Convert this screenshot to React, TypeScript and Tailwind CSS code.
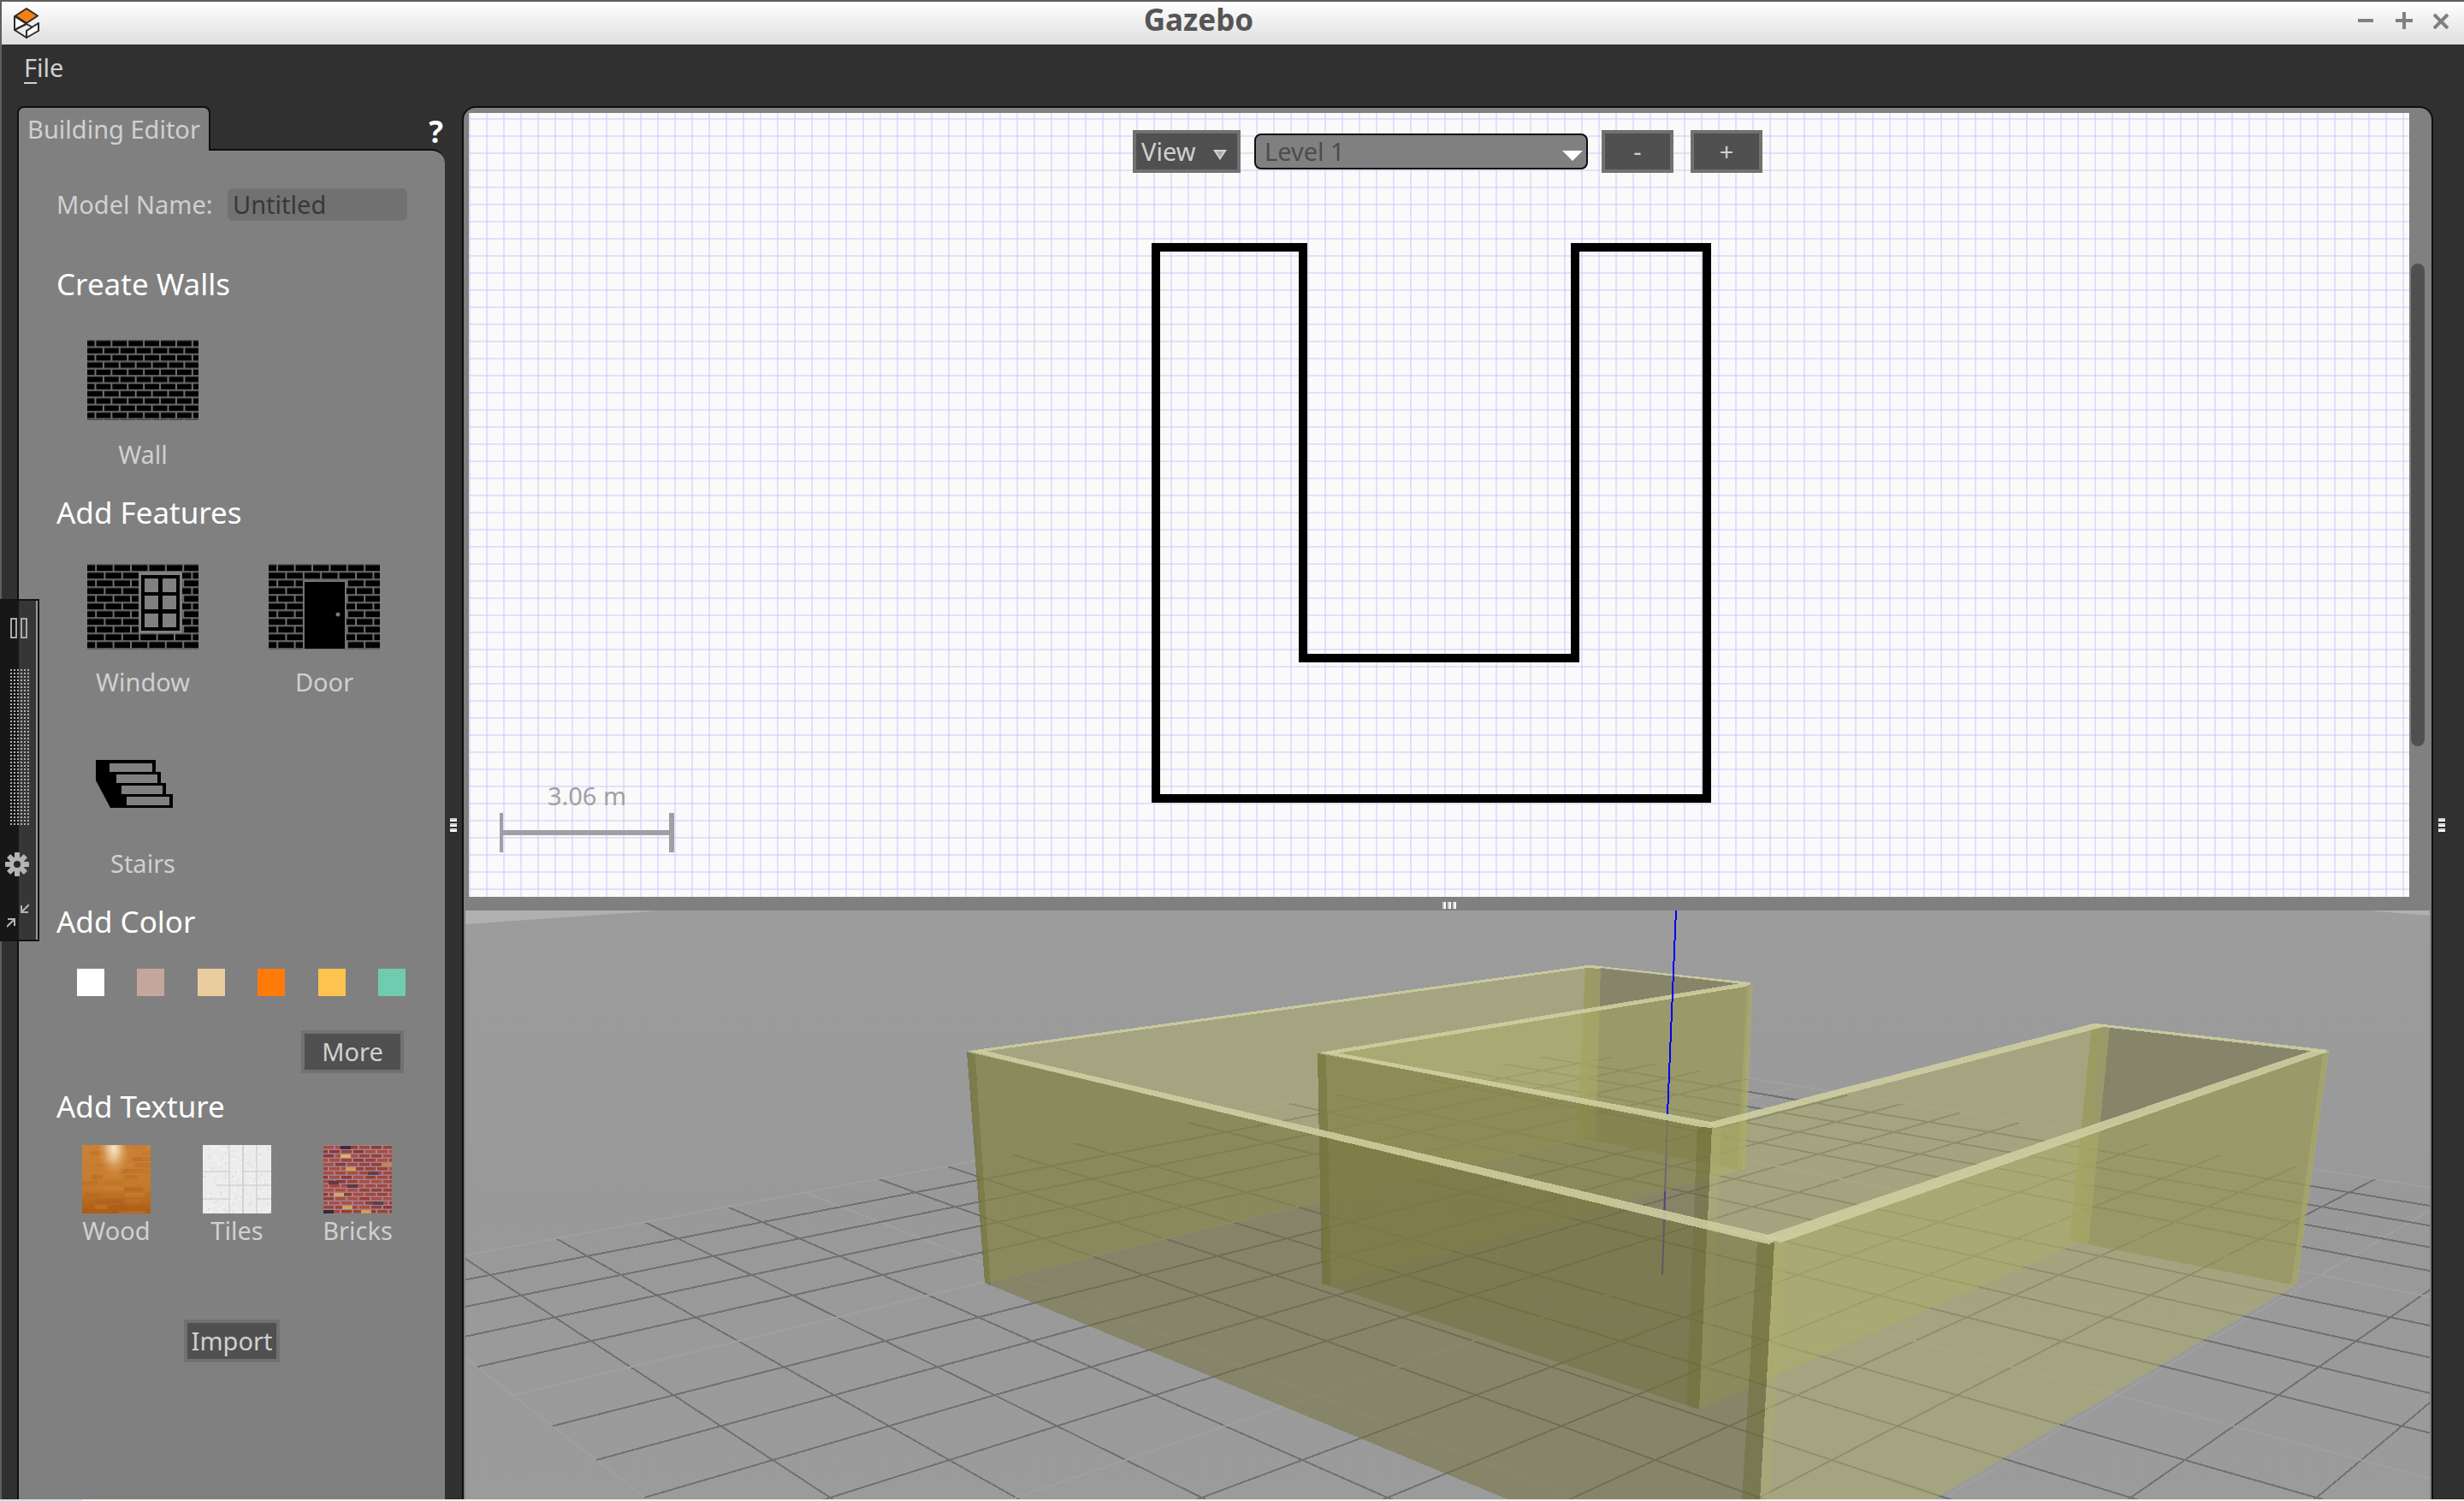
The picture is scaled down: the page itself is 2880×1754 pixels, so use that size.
import type { ReactNode } from "react";

type Point = [number, number];

/* ---------- 3D scene projection ---------- */

// Ground-plane coordinates (u, v) seen from a camera looking along the diagonal.
function project(u: number, v: number): Point {
  const depth = 27 + u + v;
  return [1692 + (2063 * (u - v) + 6918) / depth, 872 + 16683 / depth];
}

const gridSteps = Array.from({ length: 21 }, (_, i) => i - 10);

function GroundGrid() {
  const lines = gridSteps.flatMap((k) => [
    { key: `u${k}`, a: project(k, -10), b: project(k, 10), major: k % 5 === 0 },
    { key: `v${k}`, a: project(-10, k), b: project(10, k), major: k % 5 === 0 },
  ]);
  return (
    <g shapeRendering="crispEdges" strokeWidth="2">
      {lines.map((l) => (
        <line key={l.key} x1={l.a[0]} y1={l.a[1]} x2={l.b[0]} y2={l.b[1]} stroke={l.major ? "#a0a0a0" : "#717171"} />
      ))}
    </g>
  );
}

const DARK = "rgba(113,112,58,0.5)";
const LIGHT = "rgba(173,173,104,0.5)";
const EDGE = "rgba(208,208,162,0.85)";

function Scene() {
  return (
    <svg
      viewBox="544 1064 2296 688"
      preserveAspectRatio="xMidYMid slice"
      className="block size-full"
      role="img"
      aria-label="3D preview"
    >
      <defs>
        <linearGradient id="ground" x1="0" y1="0" x2="0" y2="1">
          <stop offset="0" stopColor="#9c9c9c" />
          <stop offset="0.5" stopColor="#999999" />
          <stop offset="1" stopColor="#9b9b9b" />
        </linearGradient>
      </defs>
      <rect x="544" y="1064" width="2296" height="688" fill="url(#ground)" />
      <polygon points="544,1064 774,1064 544,1080" fill="#b0b0b0" />
      <polygon points="2768,1064 2840,1064 2840,1070" fill="#b0b0b0" />
      <GroundGrid />
      <line x1="1949" y1="1302" x2="1943" y2="1490" stroke="#1c1cd0" strokeWidth="2" />

      <g shapeRendering="crispEdges">
        {/* outer left wall */}
        <polygon points="1134,1229 1862,1130 1854,1329 1153,1499" fill={LIGHT} />
        {/* far end of the left arm */}
        <polygon points="1853,1130 2045,1150 2036,1368 1843,1329" fill={DARK} />
        <polygon points="1853,1130 1871,1130 1865,1331 1843,1329" fill={LIGHT} />
        {/* inner wall of the left arm */}
        <polygon points="1540,1231 2045,1150 2040,1366 1550,1502" fill={LIGHT} />
        <polygon points="2042,1152 2049,1152 2040,1366 2031,1366" fill={LIGHT} />
        {/* inner wall of the right arm */}
        <polygon points="2001,1315 2455,1198 2430,1452 1986,1647" fill={LIGHT} />
        {/* inner cross wall */}
        <polygon points="1540,1231 2001,1315 1986,1647 1545,1500" fill={DARK} />
        <polygon points="1540,1231 1550,1233 1556,1502 1545,1500" fill="rgba(104,104,50,0.4)" />
        <polygon points="1984,1313 2001,1315 1986,1647 1971,1642" fill="rgba(104,104,50,0.4)" />
        {/* far end of the right arm */}
        <polygon points="2445,1198 2721,1229 2683,1502 2419,1450" fill={DARK} />
        <polygon points="2445,1199 2466,1199 2441,1454 2419,1450" fill={LIGHT} />
        {/* outer right wall */}
        <polygon points="2071,1449 2721,1229 2683,1502 2257,1754 2053,1874" fill={LIGHT} />
        <polygon points="2001,1318 2012,1318 1998,1640 1986,1647" fill="rgba(174,174,108,0.35)" />
        <polygon points="2074,1452 2088,1450 2068,1754 2057,1754" fill="rgba(174,174,108,0.35)" />
        <polygon points="2715,1232 2722,1229 2685,1500 2678,1503" fill="rgba(174,174,108,0.5)" />
        {/* outer front wall */}
        <polygon points="1130,1229 2074,1452 2057,1754 1767,1754 1151,1499" fill={DARK} />
        <polygon points="1130,1229 1140,1233 1158,1503 1151,1499" fill="rgba(104,104,50,0.4)" />
        <polygon points="2054,1449 2074,1452 2057,1754 2036,1754" fill="rgba(104,104,50,0.45)" />

        {/* wall tops */}
        <g fill={EDGE}>
          <polygon points="1132,1228 1856,1128 1872,1129 1870,1132 1856,1131 1148,1229" />
          <polygon points="1860,1128 2046,1148 2046,1151 1872,1131" />
          <polygon points="1542,1230 2034,1149 2046,1150 2040,1153 1562,1231" />
          <polygon points="1542,1230 1562,1230 2005,1312 2001,1318 1988,1317" />
          <polygon points="1996,1312 2447,1196 2466,1198 2455,1201 2004,1318" />
          <polygon points="2450,1196 2722,1227 2716,1230 2450,1199" />
          <polygon points="1130,1228 1152,1228 2080,1446 2068,1454 2054,1451" />
          <polygon points="2060,1445 2704,1227 2724,1229 2712,1232 2082,1452" />
        </g>
      </g>
      <line x1="1959" y1="1064" x2="1949" y2="1302" stroke="#0000f5" strokeWidth="2" shapeRendering="crispEdges" />
    </svg>
  );
}

/* ---------- tool icons ---------- */

function BrickFill({ height, pitchX, pitchY }: { height: number; pitchX: number; pitchY: number }) {
  const rows = Math.ceil(height / pitchY);
  const cols = Math.ceil(130 / pitchX) + 1;
  return (
    <g>
      <rect width="130" height={height} fill="#000" />
      {Array.from({ length: rows + 1 }, (_, r) => (
        <rect key={r} x="0" y={r * pitchY - 1} width="130" height="2.4" fill="#5c5c5c" />
      ))}
      {Array.from({ length: rows }, (_, r) =>
        Array.from({ length: cols }, (_, c) => (
          <rect
            key={`${r}-${c}`}
            x={(r % 2 ? pitchX - 1 : pitchX / 2 - 1) + c * pitchX}
            y={r * pitchY}
            width="2"
            height={pitchY}
            fill="#707070"
          />
        )),
      )}
    </g>
  );
}

function WallIcon() {
  return (
    <svg viewBox="0 0 130 94" className="h-[94px] w-[130px]" aria-hidden="true">
      <BrickFill height={94} pitchX={18.9} pitchY={8.4} />
    </svg>
  );
}

function WindowIcon() {
  return (
    <svg viewBox="0 0 130 100" className="h-[100px] w-[130px]" aria-hidden="true">
      <BrickFill height={100} pitchX={20.4} pitchY={9} />
      <rect x="60" y="9" width="51" height="72" fill="#808080" />
      <rect x="63" y="13" width="45" height="65" fill="#000" />
      {[17, 37, 58].map((y) => (
        <g key={y} fill="#808080">
          <rect x="67" y={y} width="16" height="16" />
          <rect x="88" y={y} width="16" height="16" />
        </g>
      ))}
    </svg>
  );
}

function DoorIcon() {
  return (
    <svg viewBox="0 0 130 100" className="h-[100px] w-[130px]" aria-hidden="true">
      <BrickFill height={100} pitchX={20.4} pitchY={9} />
      <rect x="40" y="19" width="51" height="81" fill="#747474" />
      <rect x="42" y="21" width="47" height="78" fill="#000" />
      <circle cx="81" cy="59" r="2.500" fill="#777" />
    </svg>
  );
}

function StairsIcon() {
  return (
    <svg viewBox="0 0 130 56" className="h-[56px] w-[130px]" aria-hidden="true">
      <path d="M10 0H80V14H86V27H92V40H100V56H27L10 24Z" fill="#000" />
      <g fill="#808080">
        <rect x="26" y="4" width="50" height="10" />
        <rect x="34" y="17" width="48" height="10" />
        <rect x="40" y="30" width="48" height="10" />
        <rect x="46" y="43" width="50" height="10" />
      </g>
    </svg>
  );
}

function Tool({ label, gap, children }: { label: string; gap: string; children: ReactNode }) {
  return (
    <button type="button" className={`flex w-[130px] flex-col items-center ${gap}`}>
      {children}
      <span>{label}</span>
    </button>
  );
}

/* ---------- texture swatches ---------- */

function noise(i: number) {
  const x = Math.sin(i * 127.1 + 11.7) * 43758.5453;
  return x - Math.floor(x);
}

function WoodSwatch() {
  const tones = ["#b5651d", "#d08a3c", "#a85a1c", "#c97f33", "#bb6d22"];
  return (
    <svg viewBox="0 0 80 80" className="size-20" aria-hidden="true">
      <defs>
        <linearGradient id="woodBase" x1="0" y1="0" x2="0" y2="1">
          <stop offset="0" stopColor="#cb8238" />
          <stop offset="0.6" stopColor="#c47a2c" />
          <stop offset="1" stopColor="#ad5a14" />
        </linearGradient>
        <radialGradient id="woodShine">
          <stop offset="0" stopColor="#f8e8c6" />
          <stop offset="0.35" stopColor="#ecc596" stopOpacity="0.85" />
          <stop offset="1" stopColor="#d08a3c" stopOpacity="0" />
        </radialGradient>
      </defs>
      <rect width="80" height="80" fill="url(#woodBase)" />
      {Array.from({ length: 36 }, (_, i) => (
        <rect
          key={i}
          x={Math.round(noise(i) * 80) - 10}
          y={Math.floor(i / 3) * 7}
          width={12 + Math.round(noise(i + 50) * 22)}
          height={5}
          fill={tones[i % 5]}
          opacity="0.35"
        />
      ))}
      <ellipse cx="37" cy="4" rx="20" ry="36" fill="url(#woodShine)" />
    </svg>
  );
}

function TilesSwatch() {
  return (
    <svg viewBox="0 0 80 80" className="size-20" aria-hidden="true">
      <rect width="80" height="80" fill="#ececec" />
      {Array.from({ length: 160 }, (_, i) => (
        <rect
          key={i}
          x={Math.floor(noise(i) * 40) * 2}
          y={Math.floor(noise(i + 300) * 40) * 2}
          width="2"
          height="2"
          fill={i % 3 ? "#f4f4f4" : "#dedede"}
        />
      ))}
      <g fill="#d2d2d2">
        <rect x="30" y="0" width="2" height="80" opacity="0.7" />
        <rect x="46" y="0" width="2" height="80" />
        <rect x="62" y="0" width="2" height="80" opacity="0.7" />
        <rect x="0" y="30" width="32" height="2" opacity="0.7" />
        <rect x="48" y="30" width="32" height="2" opacity="0.7" />
        <rect x="16" y="46" width="64" height="2" opacity="0.7" />
        <rect x="0" y="62" width="32" height="2" opacity="0.7" />
        <rect x="62" y="62" width="18" height="2" opacity="0.7" />
      </g>
    </svg>
  );
}

function BricksSwatch() {
  const tones = ["#a8453a", "#9c4232", "#b04c3a", "#96402f", "#a94f3d", "#8d3a34"];
  const accents = [
    [20, 1, "#3c2c46"],
    [20, 11, "#d8b070"],
    [26, 26, "#cfa04e"],
    [52, 31, "#5a4048"],
    [68, 21, "#c98450"],
    [6, 42, "#5c3e44"],
    [28, 46, "#583a44"],
    [12, 56, "#d2a860"],
    [58, 66, "#57404a"],
    [22, 71, "#cda552"],
    [44, 76, "#c8a056"],
    [0, 76, "#33283c"],
  ] as const;
  return (
    <svg viewBox="0 0 80 80" className="size-20" aria-hidden="true">
      <rect width="80" height="80" fill="#a28094" />
      {Array.from({ length: 16 }, (_, r) =>
        Array.from({ length: 7 }, (_, c) => (
          <rect
            key={`${r}-${c}`}
            x={c * 14 - (r % 2 ? 7 : 0)}
            y={r * 5 + 1}
            width="12"
            height="3.500"
            fill={tones[Math.floor(noise(r * 7 + c) * 6)]}
          />
        )),
      )}
      {accents.map(([x, y, fill]) => (
        <rect key={`${x}-${y}`} x={x} y={y} width="12" height="4" fill={fill} />
      ))}
    </svg>
  );
}

function Texture({ label, children }: { label: string; children: ReactNode }) {
  return (
    <button type="button" className="flex w-20 flex-col items-center whitespace-nowrap">
      {children}
      <span>{label}</span>
    </button>
  );
}

/* ---------- window chrome ---------- */

function TitleBar() {
  return (
    <header className="flex h-[50px] shrink-0 items-center bg-linear-to-b from-white to-[#dedede] pr-4 pl-[14px]">
      <svg viewBox="0 0 30 36" className="h-[36px] w-[30px]" aria-hidden="true">
        <g stroke="#2a2a2a" strokeWidth="2" strokeLinejoin="round">
          <path d="M1 10L15 19L1 26Z" fill="#fff" />
          <path d="M1 26L15 19L22 23L15 27V35Z" fill="#eee" />
          <path d="M15 27L29 18V27L15 35Z" fill="#fff" />
          <path d="M15 1L28 9.500L15 18L2 9.500Z" fill="#f58113" />
        </g>
      </svg>
      <h1 className="flex-1 pb-2 text-center text-[35px]/[40px] font-bold text-[#555]">Gazebo</h1>
      <div className="flex items-center gap-6 pb-[6px]">
        <button type="button" aria-label="Minimize">
          <svg viewBox="0 0 20 20" className="size-5" aria-hidden="true">
            <path d="M0 10H18" stroke="#808080" strokeWidth="4" />
          </svg>
        </button>
        <button type="button" aria-label="Maximize">
          <svg viewBox="0 0 20 20" className="size-5" aria-hidden="true">
            <path d="M0 10H20M10 0V20" stroke="#808080" strokeWidth="4" />
          </svg>
        </button>
        <button type="button" aria-label="Close">
          <svg viewBox="0 0 20 20" className="size-5" aria-hidden="true">
            <path d="M1 3L17 19M17 3L1 19" stroke="#808080" strokeWidth="4" />
          </svg>
        </button>
      </div>
    </header>
  );
}

function SideGrip() {
  return (
    <div className="flex flex-col gap-[2px]" aria-hidden="true">
      <div className="h-1 w-2 border-t-2 border-[#ccc] bg-white" />
      <div className="h-1 w-2 border-t-2 border-[#ccc] bg-white" />
      <div className="h-1 w-2 border-t-2 border-[#ccc] bg-white" />
    </div>
  );
}

const heading = "text-[35px]/[48px] text-white";
const pushButton = "h-[50px] border-4 border-[#717171] bg-[#505050] text-center leading-[40px]";

function Palette() {
  const colors = [
    { name: "White", bg: "bg-white" },
    { name: "Rose", bg: "bg-[#c3a79d]" },
    { name: "Sand", bg: "bg-[#e9cd9f]" },
    { name: "Orange", bg: "bg-[#fe7a09]" },
    { name: "Yellow", bg: "bg-[#fec24f]" },
    { name: "Mint", bg: "bg-[#70ccae]" },
  ];
  return (
    <aside className="ml-[18px] flex w-[500px] shrink-0 flex-col">
      <div className="flex h-[50px] items-start justify-between">
        <button
          type="button"
          role="tab"
          aria-selected="true"
          className="relative h-[52px] w-[226px] rounded-t-lg border-2 border-b-0 border-[#0e0e0e] bg-[#808080] text-center whitespace-nowrap"
        >
          Building Editor
        </button>
        <button type="button" className="mt-[10px] mr-[2px] text-[35px]/[40px] font-bold text-white">
          ?
        </button>
      </div>
      <div className="flex flex-1 flex-col rounded-tr-2xl border-t-2 border-l-2 border-[#0e0e0e] bg-[#808080] pt-[44px] pr-[44px] pl-[44px]">
        <div className="flex h-[38px] items-center justify-between">
          <label htmlFor="model-name">Model Name:</label>
          <input
            id="model-name"
            defaultValue="Untitled"
            className="h-[38px] w-[210px] rounded-md bg-[#717171] px-[6px] text-[#383838] outline-none"
          />
        </div>

        <h2 className={`${heading} mt-[50px]`}>Create Walls</h2>
        <div className="mt-[41px] pl-9">
          <Tool label="Wall" gap="gap-5">
            <WallIcon />
          </Tool>
        </div>

        <h2 className={`${heading} mt-6`}>Add Features</h2>
        <div className="mt-9 flex gap-[82px] pl-9">
          <Tool label="Window" gap="gap-[18px]">
            <WindowIcon />
          </Tool>
          <Tool label="Door" gap="gap-[18px]">
            <DoorIcon />
          </Tool>
        </div>
        <div className="mt-[71px] pl-9">
          <Tool label="Stairs" gap="gap-[45px]">
            <StairsIcon />
          </Tool>
        </div>

        <h2 className={`${heading} mt-6`}>Add Color</h2>
        <div className="mt-[31px] flex justify-between pr-[2px] pl-6">
          {colors.map((c) => (
            <button key={c.name} type="button" aria-label={c.name} className={`size-8 ${c.bg}`} />
          ))}
        </div>
        <button type="button" className={`${pushButton} mt-10 mr-1 w-[120px] self-end`}>
          More
        </button>

        <h2 className={`${heading} mt-[15px]`}>Add Texture</h2>
        <div className="mt-[21px] flex justify-between pr-[18px] pl-[30px]">
          <Texture label="Wood">
            <WoodSwatch />
          </Texture>
          <Texture label="Tiles">
            <TilesSwatch />
          </Texture>
          <Texture label="Bricks">
            <BricksSwatch />
          </Texture>
        </div>
        <button type="button" className={`${pushButton} mt-[84px] w-[112px] self-center`}>
          Import
        </button>
      </div>
    </aside>
  );
}

function RecorderBar() {
  return (
    <div className="absolute top-[576px] -left-[2px] flex h-[400px] w-[46px] flex-col border-y-2 border-r-2 border-[#141414] bg-linear-to-r from-[#171717] from-50% to-[#363636] to-50%">
      <div className="flex flex-1 flex-col border-r-2 border-[#999] pt-5">
        <button type="button" aria-label="Pause" className="ml-3 flex gap-1">
          <span className="h-6 w-2 border-2 border-[#aaa]" />
          <span className="h-6 w-2 border-2 border-[#aaa]" />
        </button>
        <svg className="mt-9 ml-3 h-[182px] w-[22px]" viewBox="0 0 22 182" shapeRendering="crispEdges" aria-hidden="true">
          <defs>
            <pattern id="dots" width="4" height="4" patternUnits="userSpaceOnUse">
              <rect width="2" height="2" fill="#b0b0b0" />
            </pattern>
          </defs>
          <rect width="22" height="182" fill="url(#dots)" />
        </svg>
        <button type="button" aria-label="Settings" className="mt-8 ml-[6px] w-7">
          <svg viewBox="-14 -14 28 28" className="size-7" aria-hidden="true">
            <g fill="#b4b4b4">
              {[0, 45, 90, 135].map((a) => (
                <rect key={a} x="-3" y="-14" width="6" height="28" rx="1" transform={`rotate(${a})`} />
              ))}
              <circle r="9" />
            </g>
            <circle r="4" fill="#262626" />
          </svg>
        </button>
        <button type="button" aria-label="Shrink" className="mt-8 ml-2 w-[26px]">
          <svg viewBox="0 0 26 28" className="h-7 w-[26px]" fill="none" stroke="#b4b4b4" strokeWidth="2" aria-hidden="true">
            <path d="M26 1L17 10M17 2V10H25" />
            <path d="M0 27L9 18M1 18H9V26" />
          </svg>
        </button>
      </div>
    </div>
  );
}

function PlanView() {
  return (
    <section className="relative flex min-h-0 flex-[916] pt-[6px] pl-[6px]">
      <div className="relative flex-1 overflow-hidden bg-[#fafafa] bg-[linear-gradient(90deg,#c8c6fc80_2px,transparent_2px),linear-gradient(#c8c6fc80_2px,transparent_2px)] bg-size-[20px_20px] bg-position-[0_0,0_6px]">
        <svg
          viewBox="0 0 654 654"
          className="absolute top-[152px] left-[798px] size-[654px]"
          fill="none"
          stroke="#000"
          strokeWidth="10"
          role="img"
          aria-label="Floor plan"
        >
          <path d="M5 5H177V485H495V5H649V649H5Z" />
        </svg>
        <div className="absolute bottom-[52px] left-9 w-[204px] text-center text-[#a0a0a4]">
          <div>3.06 m</div>
          <svg viewBox="0 0 204 46" className="block h-[46px] w-[204px]" fill="#a0a0a4" aria-hidden="true">
            <rect width="4" height="46" />
            <rect x="198" width="6" height="46" />
            <rect y="20" width="204" height="6" />
          </svg>
        </div>
      </div>
      <div className="w-[26px] pt-[176px] pl-[2px]">
        <div className="h-[564px] w-4 rounded-full bg-[#505050]" />
      </div>
      <div className="absolute inset-x-0 top-[26px] flex items-center justify-center gap-4">
        <button type="button" className={`${pushButton} flex w-[126px] items-center justify-between pr-3 pl-[6px]`}>
          View
          <svg viewBox="0 0 16 12" className="mt-2 h-3 w-4" aria-hidden="true">
            <path d="M0 0H16L8 12Z" fill="#d4d4d4" />
            <path d="M4 2H12L8 9Z" fill="#aaa" />
          </svg>
        </button>
        <div className="relative">
          <select
            aria-label="Level"
            className="block h-[42px] w-[390px] appearance-none rounded-lg border-2 border-[#0e0e0e] bg-[#808080] pl-[10px] leading-[38px] text-[#4c4c4c]"
          >
            <option>Level 1</option>
          </select>
          <svg viewBox="0 0 24 12" className="pointer-events-none absolute top-5 right-[6px] h-3 w-6" aria-hidden="true">
            <path d="M0 0H24L12 12Z" fill="#fff" />
          </svg>
        </div>
        <div className="flex gap-5">
          <button type="button" className={`${pushButton} w-[84px]`}>
            -
          </button>
          <button type="button" className={`${pushButton} w-[84px]`}>
            +
          </button>
        </div>
      </div>
    </section>
  );
}

export default function App() {
  return (
    <div className="flex h-screen min-h-[1700px] w-full flex-col bg-[#303030] font-['Noto_Sans','Open_Sans',sans-serif] text-[29px]/[40px] text-[#d0d0d0]">
      <div className="flex min-h-0 flex-1 flex-col border-t-2 border-l-2 border-[#5e5e5e]">
        <TitleBar />
        <nav className="flex h-[72px] shrink-0 items-start pt-[7px] pl-[26px]">
          <button type="button">
            <span className="underline decoration-2 underline-offset-[6px]">F</span>ile
          </button>
        </nav>
        <main className="relative flex min-h-0 flex-1">
          <Palette />
          <div className="flex w-5 shrink-0 items-center justify-center pt-[52px]">
            <SideGrip />
          </div>
          <div className="flex min-w-0 flex-1 flex-col overflow-hidden rounded-t-2xl border-2 border-b-0 border-[#0e0e0e] bg-[#808080]">
            <PlanView />
            <div className="flex h-4 shrink-0 items-end justify-center gap-[2px] pb-[2px] pl-1" aria-hidden="true">
              <div className="h-2 w-1 border-l-2 border-[#ccc] bg-white" />
              <div className="h-2 w-1 border-l-2 border-[#ccc] bg-white" />
              <div className="h-2 w-1 border-l-2 border-[#ccc] bg-white" />
            </div>
            <section className="min-h-0 flex-[688] px-[2px]">
              <Scene />
            </section>
          </div>
          <div className="flex w-9 shrink-0 items-center pt-[52px] pl-[6px]">
            <SideGrip />
          </div>
          <RecorderBar />
        </main>
      </div>
      <div className="flex h-[2px] shrink-0 bg-[#f2f2f2]">
        <div className="w-24 bg-[#c8e3f5]" />
      </div>
    </div>
  );
}
